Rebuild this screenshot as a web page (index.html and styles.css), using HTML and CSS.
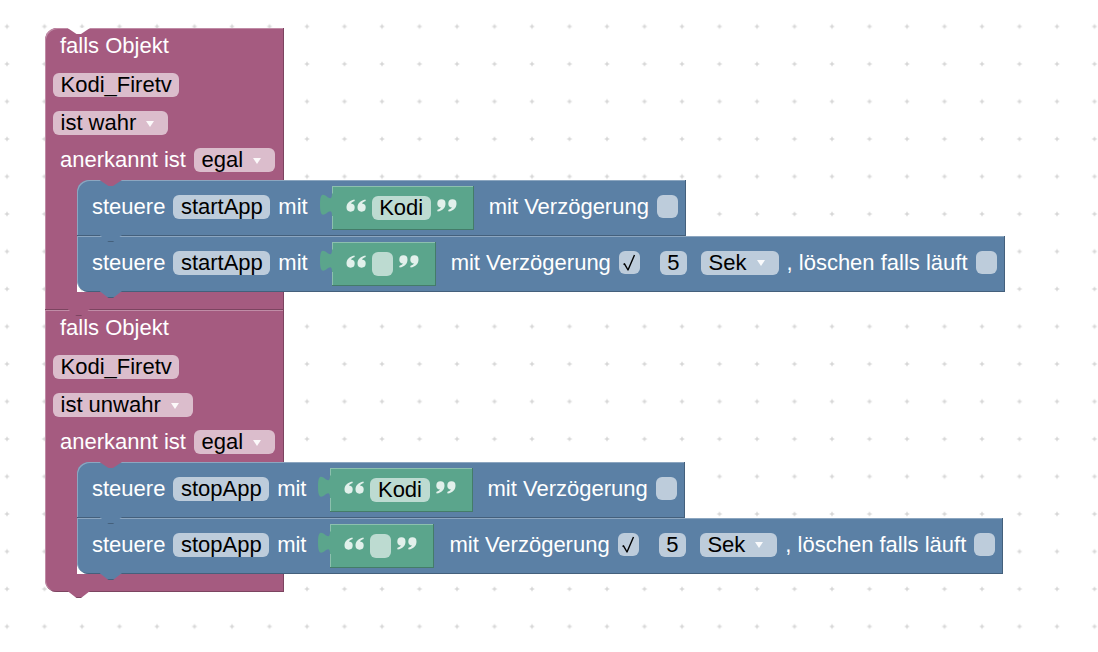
FILE: index.html
```html
<!DOCTYPE html>
<html lang="de">
<head>
    <meta charset="UTF-8">
    <meta name="viewport" content="width=device-width, initial-scale=1.0">
    <title>Blockly – Kodi Firetv</title>
    <link rel="stylesheet" href="styles.css">
</head>
<body>
    <!-- gemeinsame Symbole: Anführungszeichen, Haken -->
    <svg class="defs" width="0" height="0" aria-hidden="true">
        <defs>
            <symbol id="quote-open" viewBox="0 0 20 13">
                <path d="M0.5,8.6 C0.5,4.4 3.2,1.5 8.4,0.4 L8.8,2.1 C6.6,2.9 5.4,3.8 5,4.5 A4.1,4.1 0 1 1 0.5,8.6 Z"/>
                <path transform="translate(11 0)" d="M0.5,8.6 C0.5,4.4 3.2,1.5 8.4,0.4 L8.8,2.1 C6.6,2.9 5.4,3.8 5,4.5 A4.1,4.1 0 1 1 0.5,8.6 Z"/>
            </symbol>
            <symbol id="quote-close" viewBox="0 0 20 13">
                <g transform="rotate(180 10 6.5)">
                    <path d="M0.5,8.6 C0.5,4.4 3.2,1.5 8.4,0.4 L8.8,2.1 C6.6,2.9 5.4,3.8 5,4.5 A4.1,4.1 0 1 1 0.5,8.6 Z"/>
                    <path transform="translate(11 0)" d="M0.5,8.6 C0.5,4.4 3.2,1.5 8.4,0.4 L8.8,2.1 C6.6,2.9 5.4,3.8 5,4.5 A4.1,4.1 0 1 1 0.5,8.6 Z"/>
                </g>
            </symbol>
            <symbol id="tick" viewBox="0 0 21 23">
                <path d="M4.5,13.5 L5.5,12.8 L9,19 L15.5,4" fill="none" stroke="#000" stroke-width="1.4" stroke-linejoin="round"/>
            </symbol>
        </defs>
    </svg>

    <div class="workspace">
        <svg class="grid" width="1098" height="652">
            <defs>
                <pattern id="dots" width="37.5" height="37.5" patternUnits="userSpaceOnUse" x="-11.75" y="7.75">
                    <path d="M16.5 18.75H21M18.75 16.5V21" stroke="#ccc" stroke-width="1"/>
                </pattern>
            </defs>
            <rect width="100%" height="100%" fill="url(#dots)"/>
        </svg>

        <div class="stack">
            <!-- falls Objekt ... ist wahr -->
            <div class="ctrl first">
                <div class="ctrl-head">
                    <div class="row"><span class="label">falls Objekt</span></div>
                    <div class="row"><span class="field">Kodi_Firetv</span></div>
                    <div class="row"><span class="field dropdown">ist wahr<i class="arrow"></i></span></div>
                    <div class="row"><span class="label">anerkannt ist</span><span class="field dropdown">egal<i class="arrow"></i></span></div>
                </div>
                <div class="ctrl-body">
                    <div class="ctrl-spine"></div>
                    <div class="statements">
                        <div class="action">
                            <span class="label">steuere</span>
                            <span class="field">startApp</span>
                            <span class="label">mit</span>
                            <span class="text-block">
                                <svg class="out-tab" viewBox="0 -5 13 36"><path d="M13,7.5 H12 C12,22.5 0,-4.5 0,18.75 S12,15 12,30 H13 Z"/></svg>
                                <svg class="quote"><use href="#quote-open"/></svg>
                                <span class="field">Kodi</span>
                                <svg class="quote"><use href="#quote-close"/></svg>
                            </span>
                            <span class="label after-input">mit Verzögerung</span>
                            <span class="checkbox"></span>
                        </div>
                        <div class="action">
                            <span class="label">steuere</span>
                            <span class="field">startApp</span>
                            <span class="label">mit</span>
                            <span class="text-block">
                                <svg class="out-tab" viewBox="0 -5 13 36"><path d="M13,7.5 H12 C12,22.5 0,-4.5 0,18.75 S12,15 12,30 H13 Z"/></svg>
                                <svg class="quote"><use href="#quote-open"/></svg>
                                <span class="field empty"></span>
                                <svg class="quote"><use href="#quote-close"/></svg>
                            </span>
                            <span class="label after-input">mit Verzögerung</span>
                            <span class="checkbox"><svg class="tick"><use href="#tick"/></svg></span>
                            <span class="field num">5</span>
                            <span class="field dropdown unit">Sek<i class="arrow"></i></span>
                            <span class="label">, löschen falls läuft</span>
                            <span class="checkbox"></span>
                        </div>
                    </div>
                </div>
                <div class="ctrl-foot"></div>
            </div>

            <!-- falls Objekt ... ist unwahr -->
            <div class="ctrl last">
                <div class="ctrl-head">
                    <div class="row"><span class="label">falls Objekt</span></div>
                    <div class="row"><span class="field">Kodi_Firetv</span></div>
                    <div class="row"><span class="field dropdown">ist unwahr<i class="arrow"></i></span></div>
                    <div class="row"><span class="label">anerkannt ist</span><span class="field dropdown">egal<i class="arrow"></i></span></div>
                </div>
                <div class="ctrl-body">
                    <div class="ctrl-spine"></div>
                    <div class="statements">
                        <div class="action">
                            <span class="label">steuere</span>
                            <span class="field">stopApp</span>
                            <span class="label">mit</span>
                            <span class="text-block">
                                <svg class="out-tab" viewBox="0 -5 13 36"><path d="M13,7.5 H12 C12,22.5 0,-4.5 0,18.75 S12,15 12,30 H13 Z"/></svg>
                                <svg class="quote"><use href="#quote-open"/></svg>
                                <span class="field">Kodi</span>
                                <svg class="quote"><use href="#quote-close"/></svg>
                            </span>
                            <span class="label after-input">mit Verzögerung</span>
                            <span class="checkbox"></span>
                        </div>
                        <div class="action">
                            <span class="label">steuere</span>
                            <span class="field">stopApp</span>
                            <span class="label">mit</span>
                            <span class="text-block">
                                <svg class="out-tab" viewBox="0 -5 13 36"><path d="M13,7.5 H12 C12,22.5 0,-4.5 0,18.75 S12,15 12,30 H13 Z"/></svg>
                                <svg class="quote"><use href="#quote-open"/></svg>
                                <span class="field empty"></span>
                                <svg class="quote"><use href="#quote-close"/></svg>
                            </span>
                            <span class="label after-input">mit Verzögerung</span>
                            <span class="checkbox"><svg class="tick"><use href="#tick"/></svg></span>
                            <span class="field num">5</span>
                            <span class="field dropdown unit">Sek<i class="arrow"></i></span>
                            <span class="label">, löschen falls läuft</span>
                            <span class="checkbox"></span>
                        </div>
                    </div>
                </div>
                <div class="ctrl-foot"></div>
            </div>
        </div>
    </div>
</body>
</html>
```

FILE: styles.css
```css
body {
    margin: 0;
    background-color: #fff;
    font-family: "Liberation Sans", Arial, sans-serif;
}
.defs {
    position: absolute;
    width: 0;
    height: 0;
}

/* Arbeitsfläche mit Punktraster */
.workspace {
    position: relative;
    width: 1098px;
    height: 652px;
    overflow: hidden;
}
.grid {
    position: absolute;
    left: 0;
    top: 0;
}
.stack {
    position: absolute;
    left: 45px;
    top: 28px;
}

/* gemeinsame Teile */
.row {
    display: flex;
    align-items: center;
    gap: 8px;
    height: 24px;
}
.label {
    font-size: 22px;
    line-height: 24px;
    white-space: nowrap;
}
.field {
    display: inline-flex;
    align-items: center;
    height: 24px;
    padding: 0 7.5px;
    border-radius: 6px;
    font-size: 22px;
    line-height: 24px;
    color: #000;
    white-space: nowrap;
    flex: none;
}
.dropdown {
    padding-right: 14px;
}
.arrow {
    display: inline-block;
    width: 0;
    height: 0;
    margin-left: 10px;
    margin-top: 1px;
    border-left: 4.5px solid transparent;
    border-right: 4.5px solid transparent;
    border-top: 6px solid rgba(255, 255, 255, 0.9);
}

/* Steuerblock "falls Objekt" (lila, C-Form) */
.ctrl {
    display: flex;
    flex-direction: column;
    align-items: flex-start;
    color: #fff;
}
.ctrl .field { background-color: #dbbdcc; }
.ctrl-head {
    position: relative;
    width: 239px;
    box-sizing: border-box;
    padding: 6px 0 8px 8px;
    display: flex;
    flex-direction: column;
    gap: 14px;
    background-color: #a55b80;
    box-shadow: inset -1px 0 0 #7c4460, inset 1px 1px 0 #c08ca6;
}
.ctrl-head .row:first-child { margin-bottom: 1px; }
.ctrl-head .row:last-child { margin-top: -1px; }
.ctrl-head .row > .label:first-child { margin-left: 7px; }
.ctrl.first .ctrl-head { border-top-left-radius: 12px; }
.ctrl.first .ctrl-head::before {
    content: "";
    position: absolute;
    left: 22.5px;
    top: 0;
    width: 22.5px;
    height: 6px;
    background-color: #fff;
    clip-path: polygon(0 0, 100% 0, 60% 100%, 40% 100%);
}
.ctrl-body {
    display: flex;
}
.ctrl-spine {
    position: relative;
    width: 32px;
    flex: none;
    background-color: #a55b80;
    box-shadow: inset 1px 0 0 #c08ca6;
}
/* füllt die runde Ecke des ersten Befehls */
.ctrl-spine::after {
    content: "";
    position: absolute;
    left: 100%;
    top: 0;
    width: 12px;
    height: 12px;
    background-color: #a55b80;
}
.statements {
    display: flex;
    flex-direction: column;
    align-items: flex-start;
}
.ctrl-foot {
    position: relative;
    width: 239px;
    height: 18px;
    background-color: #a55b80;
    box-shadow: inset -1px -1px 0 #7c4460, inset 1px 0 0 #c08ca6;
}
.ctrl.last .ctrl-foot { border-bottom-left-radius: 12px; }
.ctrl-foot::after {
    content: "";
    position: absolute;
    left: 22.5px;
    bottom: -6px;
    width: 22.5px;
    height: 7px;
    z-index: 2;
    background: linear-gradient(to top, #7c4460 1px, #a55b80 1px);
    clip-path: polygon(0 0, 100% 0, 60% 100%, 40% 100%);
}

/* Befehlsblock "steuere" (blau) */
.action {
    position: relative;
    display: flex;
    align-items: center;
    gap: 8px;
    height: 56px;
    box-sizing: border-box;
    padding: 0 8px 0 15px;
    background-color: #5b80a5;
    color: #fff;
    box-shadow: inset -1px -1px 0 #44607c, inset 1px 1px 0 #8ca6c0;
}
.action > .label,
.action > .field,
.action > .checkbox {
    margin-bottom: 3px;
}
.action .field { background-color: #bdccdb; }
.action:first-child { border-top-left-radius: 12px; }
.action:last-child { border-bottom-left-radius: 12px; }
.action:first-child::before {
    content: "";
    position: absolute;
    left: 22.5px;
    top: 0;
    width: 22.5px;
    height: 6px;
    z-index: 1;
    background-color: #a55b80;
    clip-path: polygon(0 0, 100% 0, 60% 100%, 40% 100%);
}
.action::after {
    content: "";
    position: absolute;
    left: 22.5px;
    bottom: -6px;
    width: 22.5px;
    height: 7px;
    z-index: 2;
    background: linear-gradient(to top, #44607c 1px, #5b80a5 1px);
    clip-path: polygon(0 0, 100% 0, 60% 100%, 40% 100%);
}
.after-input { margin-left: 7px; }
.num { margin-left: 12px; }
.unit { margin-left: 6px; }
.checkbox {
    display: flex;
    align-items: center;
    justify-content: center;
    width: 21px;
    height: 23px;
    flex: none;
    border-radius: 6px;
    background-color: #bdccdb;
}
.tick {
    width: 21px;
    height: 23px;
}

/* Textblock (grün) mit Anführungszeichen */
.text-block {
    position: relative;
    display: flex;
    align-items: center;
    gap: 6px;
    height: 44px;
    box-sizing: border-box;
    padding: 0 17px 0 14px;
    margin-left: 16px;
    background-color: #5ba58c;
    box-shadow: inset -1px -1px 0 #447c69, inset 1px 1px 0 #8cc0ae;
}
.text-block .field { background-color: #bddbd1; }
.field.empty {
    width: 21px;
    padding: 0;
}
.out-tab {
    position: absolute;
    left: -12px;
    top: -5px;
    width: 13px;
    height: 36px;
    fill: #5ba58c;
}
.quote {
    width: 20px;
    height: 13px;
    margin-bottom: 6px;
    flex: none;
    fill: #e2f0eb;
}
```
